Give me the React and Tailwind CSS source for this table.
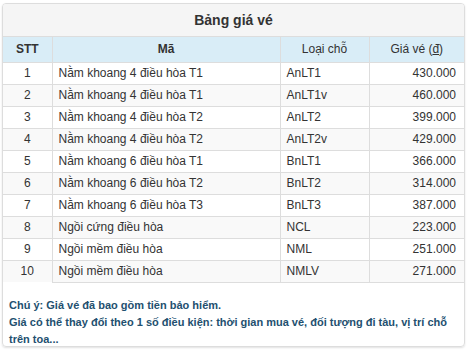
const rows = [
  [1, "Nằm khoang 4 điều hòa T1", "AnLT1", "430.000"],
  [2, "Nằm khoang 4 điều hòa T1", "AnLT1v", "460.000"],
  [3, "Nằm khoang 4 điều hòa T2", "AnLT2", "399.000"],
  [4, "Nằm khoang 4 điều hòa T2", "AnLT2v", "429.000"],
  [5, "Nằm khoang 6 điều hòa T1", "BnLT1", "366.000"],
  [6, "Nằm khoang 6 điều hòa T2", "BnLT2", "314.000"],
  [7, "Nằm khoang 6 điều hòa T3", "BnLT3", "387.000"],
  [8, "Ngồi cứng điều hòa", "NCL", "223.000"],
  [9, "Ngồi mềm điều hòa", "NML", "251.000"],
  [10, "Ngồi mềm điều hòa", "NMLV", "271.000"],
];

export default function App() {
  return (
    <div className="w-[472px] h-[353px] bg-white pt-[3px] pl-[2px] font-['Liberation_Sans',Arial,sans-serif] text-[#333]">
      <div className="w-[463px] h-[344px] border border-[#ddd] rounded-[4px] shadow-[0_1px_2px_rgba(0,0,0,0.12)] overflow-hidden">
        {/* Heading */}
        <div className="h-[33px] bg-[#f5f5f5] border-b border-[#ddd] flex items-center justify-center text-[14px] font-bold">
          Bảng giá vé
        </div>

        <table className="w-full border-collapse text-[12px]">
          <colgroup>
            <col className="w-[49px]" />
            <col className="w-[228px]" />
            <col className="w-[89px]" />
            <col />
          </colgroup>
          <thead>
            <tr className="bg-[#d9edf7] h-[25px]">
              <th className="border-r border-[#ddd] font-bold text-center">STT</th>
              <th className="border-x border-[#ddd] font-bold text-center">Mã</th>
              <th className="border-x border-[#ddd] font-normal text-center">Loại chỗ</th>
              <th className="border-l border-[#ddd] font-normal text-center">Giá vé (<u>đ</u>)</th>
            </tr>
          </thead>
          <tbody>
            {rows.map(([stt, ma, loai, gia]) => (
              <tr key={stt} className={`h-[22px] ${stt % 2 === 0 ? "bg-[#f9f9f9]" : "bg-white"}`}>
                <td className="border-t border-r border-[#ddd] text-center">{stt}</td>
                <td className="border border-[#ddd] pl-[6px]">{ma}</td>
                <td className="border border-[#ddd] pl-[6px]">{loai}</td>
                <td className="border-t border-l border-b border-[#ddd] text-right pr-[8px]">{gia}</td>
              </tr>
            ))}
          </tbody>
        </table>

        <div className="pt-[14px] px-[6px] text-[11px] leading-[17px] font-bold text-[#23506f]">
          <div>Chú ý: Giá vé đã bao gồm tiền bảo hiểm.</div>
          <div>Giá có thể thay đổi theo 1 số điều kiện: thời gian mua vé, đối tượng đi tàu, vị trí chỗ trên toa...</div>
        </div>
      </div>
    </div>
  );
}
